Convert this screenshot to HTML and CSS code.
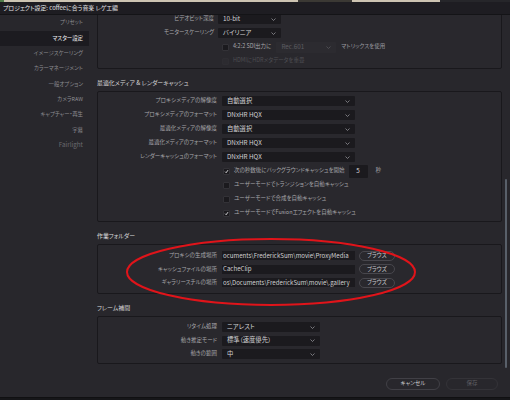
FILE: index.html
```html
<!DOCTYPE html>
<html lang="ja">
<head>
<meta charset="utf-8">
<title>プロジェクト設定</title>
<link rel="stylesheet" href="styles.css">
</head>
<body>
<div class="window">
  <div class="topstrip"><span class="ts-green"></span><span class="ts-beige"></span><span class="ts-dark"></span><span class="ts-beige2"></span></div>
  <div class="titlebar">プロジェクト設定: coffeeに合う音楽 レゲエ編</div>
  <div class="body">
    <nav class="sidebar">
      <div class="nav-item">プリセット</div>
      <div class="nav-item active">マスター設定</div>
      <div class="nav-item">イメージスケーリング</div>
      <div class="nav-item">カラーマネージメント</div>
      <div class="nav-item">一般オプション</div>
      <div class="nav-item">カメラRAW</div>
      <div class="nav-item">キャプチャー・再生</div>
      <div class="nav-item">字幕</div>
      <div class="nav-item dim latin">Fairlight</div>
    </nav>
    <main class="main">
      <div class="scroll">
        <section class="panel panel-top">
          <div class="row">
            <div class="label">ビデオビット深度</div>
            <div class="select w63">10-bit<svg viewBox="0 0 5 3"><polyline points="0.5,0.5 2.5,2.5 4.5,0.5"/></svg></div>
          </div>
          <div class="row">
            <div class="label">モニタースケーリング</div>
            <div class="select w63">バイリニア<svg viewBox="0 0 5 3"><polyline points="0.5,0.5 2.5,2.5 4.5,0.5"/></svg></div>
          </div>
          <div class="row">
            <div class="label"></div>
            <div class="cb cb-indent"></div>
            <span class="cb-text">4:2:2 SDI出力に</span>
            <div class="select select-disabled w60">Rec.601<svg viewBox="0 0 5 3"><polyline points="0.5,0.5 2.5,2.5 4.5,0.5"/></svg></div>
            <span class="after-text">マトリックスを使用</span>
          </div>
          <div class="row">
            <div class="label"></div>
            <div class="cb cb-indent cb-disabled"></div>
            <span class="cb-text text-disabled">HDMIにHDRメタデータを重畳</span>
          </div>
        </section>

        <h3 class="section-title">最適化メディア &amp; レンダーキャッシュ</h3>
        <section class="panel panel-cache">
          <div class="row">
            <div class="label">プロキシメディアの解像度</div>
            <div class="select w133">自動選択<svg viewBox="0 0 5 3"><polyline points="0.5,0.5 2.5,2.5 4.5,0.5"/></svg></div>
          </div>
          <div class="row">
            <div class="label">プロキシメディアのフォーマット</div>
            <div class="select w133">DNxHR HQX<svg viewBox="0 0 5 3"><polyline points="0.5,0.5 2.5,2.5 4.5,0.5"/></svg></div>
          </div>
          <div class="row">
            <div class="label">最適化メディアの解像度</div>
            <div class="select w133">自動選択<svg viewBox="0 0 5 3"><polyline points="0.5,0.5 2.5,2.5 4.5,0.5"/></svg></div>
          </div>
          <div class="row">
            <div class="label">最適化メディアのフォーマット</div>
            <div class="select w133">DNxHR HQX<svg viewBox="0 0 5 3"><polyline points="0.5,0.5 2.5,2.5 4.5,0.5"/></svg></div>
          </div>
          <div class="row">
            <div class="label">レンダーキャッシュのフォーマット</div>
            <div class="select w133">DNxHR HQX<svg viewBox="0 0 5 3"><polyline points="0.5,0.5 2.5,2.5 4.5,0.5"/></svg></div>
          </div>
          <div class="row">
            <div class="label"></div>
            <div class="cb cb-on cb-indent2"><svg viewBox="0 0 7 7"><polyline points="1.6,3.8 3,5.2 5.6,1.6"/></svg></div>
            <span class="cb-text">次の秒数後にバックグラウンドキャッシュを開始</span>
            <div class="num">5</div>
            <span class="unit">秒</span>
          </div>
          <div class="row">
            <div class="label"></div>
            <div class="cb cb-indent2"></div>
            <span class="cb-text">ユーザーモードでトランジションを自動キャッシュ</span>
          </div>
          <div class="row">
            <div class="label"></div>
            <div class="cb cb-indent2"></div>
            <span class="cb-text">ユーザーモードで合成を自動キャッシュ</span>
          </div>
          <div class="row">
            <div class="label"></div>
            <div class="cb cb-on cb-indent2"><svg viewBox="0 0 7 7"><polyline points="1.6,3.8 3,5.2 5.6,1.6"/></svg></div>
            <span class="cb-text">ユーザーモードでFusionエフェクトを自動キャッシュ</span>
          </div>
        </section>

        <h3 class="section-title">作業フォルダー</h3>
        <section class="panel panel-folders">
          <div class="row row-s">
            <div class="label">プロキシの生成場所</div>
            <div class="field">ocuments\FrederickSum\movie\ProxyMedia</div>
            <div class="browse">ブラウズ</div>
          </div>
          <div class="row row-s">
            <div class="label">キャッシュファイルの場所</div>
            <div class="field">CacheClip</div>
            <div class="browse">ブラウズ</div>
          </div>
          <div class="row row-s">
            <div class="label">ギャラリースチルの場所</div>
            <div class="field">os\Documents\FrederickSum\movie\.gallery</div>
            <div class="browse">ブラウズ</div>
          </div>
        </section>

        <h3 class="section-title">フレーム補間</h3>
        <section class="panel panel-frame">
          <div class="row row-s">
            <div class="label">リタイム処理</div>
            <div class="select w98">ニアレスト<svg viewBox="0 0 5 3"><polyline points="0.5,0.5 2.5,2.5 4.5,0.5"/></svg></div>
          </div>
          <div class="row row-s">
            <div class="label">動き推定モード</div>
            <div class="select w98">標準（速度優先）<svg viewBox="0 0 5 3"><polyline points="0.5,0.5 2.5,2.5 4.5,0.5"/></svg></div>
          </div>
          <div class="row row-s">
            <div class="label">動きの範囲</div>
            <div class="select w98">中<svg viewBox="0 0 5 3"><polyline points="0.5,0.5 2.5,2.5 4.5,0.5"/></svg></div>
          </div>
        </section>
      </div>
      <div class="footer">
        <div class="btn">キャンセル</div>
        <div class="btn btn-save">保存</div>
      </div>
    </main>
    <div class="scrollbar"><div class="thumb"></div></div>
  </div>
  <div class="bottomstrip"></div>
</div>
<svg class="annotation" viewBox="0 0 510 400"><ellipse cx="271" cy="272" rx="144" ry="33"/></svg>
</body>
</html>
```
FILE: styles.css
```css
* { box-sizing: border-box; margin: 0; padding: 0; }
html, body { width: 510px; height: 400px; overflow: hidden; }
body {
  position: relative;
  background: #28272c;
  font-family: "Noto Sans CJK JP", "Noto Sans", sans-serif;
  font-size: 5.5px;
  line-height: 1;
  color: #a6a6aa;
  font-feature-settings: "palt";
  white-space: nowrap;
}
.window { display: flex; flex-direction: column; height: 400px; }

.topstrip { display: flex; height: 2px; background: #26262a; }
.ts-green { width: 4px; background: #4f7d4a; }
.ts-beige { width: 294px; background: #cdc4b2; }
.ts-dark { width: 54px; background: #3b3934; }
.ts-beige2 { width: 88px; background: #cdc4b2; }

.titlebar {
  height: 13px;
  background: #1e1d22;
  border-bottom: 1px solid #141417;
  color: #e4e4e6;
  font-size: 5.9px;
  padding-left: 3px;
  display: flex;
  align-items: center;
}

.body { display: flex; flex: 1; min-height: 0; }

.sidebar { width: 89px; flex: none; padding-top: 0.5px; }
.nav-item {
  height: 15.3px;
  display: flex;
  align-items: center;
  justify-content: flex-end;
  padding-right: 6px;
  color: #8c8c91;
  font-size: 5.4px;
}
.nav-item.active { background: #1c1b20; color: #f2f2f4; }
.nav-item.dim { color: #6a6a6f; }
.nav-item.latin { font-size: 6.3px; }

.main { width: 414px; flex: none; display: flex; flex-direction: column; }
.scroll { height: 355px; overflow: hidden; padding-left: 8px; }

.panel {
  width: 405px;
  background: #29282d;
  border: 1px solid #19181c;
  border-radius: 2px;
}
.panel-top { margin-top: -4px; }
.panel-cache { padding: 2px 0 1px; }
.panel-folders { padding: 4px 0 3.5px; }
.panel-frame { padding: 3.25px 0 2.25px; }

.section-title {
  height: 22px;
  padding-top: 9px;
  line-height: 10px;
  font-size: 5.9px;
  font-weight: normal;
  color: #d8d8da;
}

.row { display: flex; align-items: center; height: 14px; }
.row-s { height: 13.5px; }
.label { width: 119px; flex: none; text-align: right; margin-right: 5px; }
.panel-top .label { width: 116px; margin-right: 4px; }

.select {
  flex: none;
  height: 10px;
  display: flex;
  align-items: center;
  justify-content: space-between;
  background: #1b1a1e;
  border-radius: 1px;
  padding: 0 5px;
  color: #d2d2d4;
  font-size: 6.3px;
}
.select svg { width: 5px; height: 3px; fill: none; stroke: #8f8f94; stroke-width: 0.8; }
.w63 { width: 63px; }
.w60 { width: 60px; }
.w133 { width: 133px; }
.w98 { width: 98px; }
.select-disabled {
  background: #2c2b30;
  color: #5d5d62;
  margin-left: 5px;
  height: 11px;
}
.select-disabled svg { stroke: #55555a; }

.cb {
  flex: none;
  width: 7px;
  height: 7px;
  background: #1b1a1e;
  border: 1px solid #333237;
  border-radius: 1px;
  display: flex;
}
.cb svg { width: 5px; height: 5px; fill: none; stroke: #f0f0f2; stroke-width: 1.2; }
.cb-indent { margin-left: 4px; }
.cb-indent2 { margin-left: 1px; }
.cb-disabled { background: #2c2b30; border-color: #2e2d32; }
.cb-text { margin-left: 4px; color: #a6a6aa; }
.text-disabled { color: #4e4e53; }
.after-text { margin-left: 5px; color: #9d9da1; }

.num {
  flex: none;
  width: 19px;
  height: 13px;
  margin-left: 4px;
  background: #1b1a1e;
  border-radius: 1px;
  color: #d8d8da;
  font-size: 6.3px;
  display: flex;
  align-items: center;
  justify-content: center;
}
.unit { margin-left: 8px; }

.field {
  flex: none;
  width: 133px;
  height: 9px;
  background: #1b1a1e;
  color: #d0d0d2;
  font-size: 6.1px;
  padding-left: 1px;
  overflow: hidden;
  display: flex;
  align-items: center;
}
.browse {
  flex: none;
  width: 36px;
  height: 10px;
  margin-left: 4px;
  border: 1px solid #48474d;
  border-radius: 5px;
  color: #c9c9cc;
  display: flex;
  align-items: center;
  justify-content: center;
}

.footer {
  flex: 1;
  display: flex;
  justify-content: flex-end;
  align-items: flex-start;
  gap: 6px;
  padding: 8px 5px 0 0;
}
.btn {
  width: 54px;
  height: 12px;
  border: 1px solid #414046;
  border-radius: 6px;
  color: #cfcfd2;
  display: flex;
  align-items: center;
  justify-content: center;
}
.btn-save { width: 52px; color: #5c5c61; border-color: #343338; }

.scrollbar { width: 7px; flex: none; }
.thumb {
  margin-left: 2px;
  margin-top: 164px;
  width: 2px;
  height: 189px;
  background: #59606a;
  border-radius: 1px;
}

.bottomstrip { height: 3px; background: #161619; border-top: 1px solid #101012; }

.annotation {
  position: absolute;
  left: 0;
  top: 0;
  width: 510px;
  height: 400px;
  pointer-events: none;
}
.annotation ellipse { fill: none; stroke: #e0141a; stroke-width: 2; }
```
